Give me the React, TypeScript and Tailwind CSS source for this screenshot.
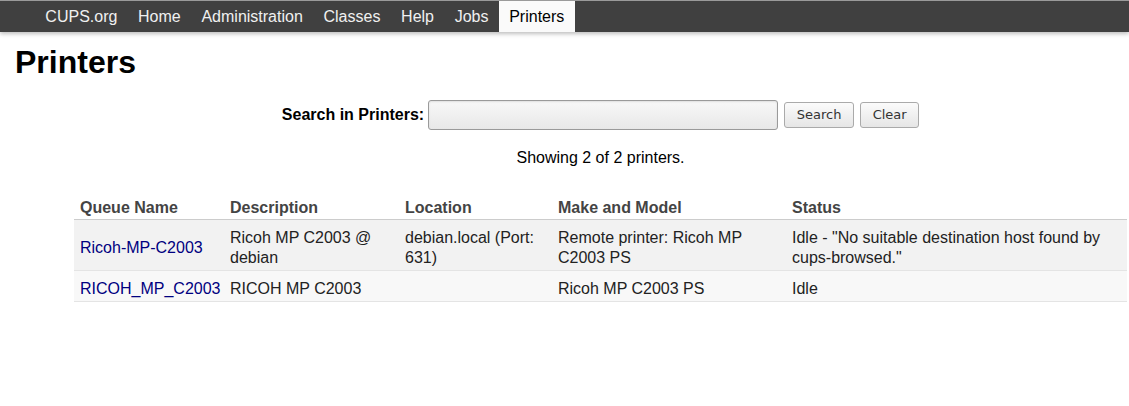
import React from 'react';

const navItems = ['CUPS.org', 'Home', 'Administration', 'Classes', 'Help', 'Jobs', 'Printers'];

const printers = [
  {
    name: 'Ricoh-MP-C2003',
    description: 'Ricoh MP C2003 @ debian',
    location: 'debian.local (Port: 631)',
    model: 'Remote printer: Ricoh MP C2003 PS',
    status: 'Idle - "No suitable destination host found by cups-browsed."',
  },
  {
    name: 'RICOH_MP_C2003',
    description: 'RICOH MP C2003',
    location: '',
    model: 'Ricoh MP C2003 PS',
    status: 'Idle',
  },
];

export default function App() {
  return (
    <div className="min-h-[406px] bg-white text-[#222] text-[16px] font-['Liberation_Sans',Arial,sans-serif]">
      {/* Header */}
      <div className="h-[32px] bg-[#404040] border-t border-[#9a9a9a] shadow-[0_2px_4px_rgba(0,0,0,0.25)] flex pl-[35px]">
        {navItems.map((item) => (
          <a
            key={item}
            className={
              item === 'Printers'
                ? 'px-[10.35px] flex items-center bg-[#fafafa] text-black'
                : 'px-[10.35px] flex items-center text-[#f0f0f0]'
            }
          >
            {item}
          </a>
        ))}
      </div>

      <h1 className="ml-[15px] mt-[12px] text-[32px] leading-[37px] font-bold text-black">Printers</h1>

      <div className="ml-[74px] mr-[2px]">
        {/* Search */}
        <form className="mt-[19px] flex items-center justify-center">
          <b className="text-black mr-[4px]">Search in Printers:</b>
          <input
            type="text"
            className="w-[350px] h-[30px] rounded-[3px] border border-[#9a9a9a] bg-gradient-to-b from-[#f8f8f8] to-[#e8e8e8] shadow-[inset_0_1px_2px_rgba(0,0,0,0.1)]"
          />
          <button
            type="button"
            className="ml-[6px] w-[70px] h-[26px] rounded-[3px] border border-[#aaa] bg-gradient-to-b from-[#fbfbfb] to-[#e6e6e6] text-[13px] text-[#333] font-['DejaVu_Sans',sans-serif]"
          >
            Search
          </button>
          <button
            type="button"
            className="ml-[6px] w-[59px] h-[26px] rounded-[3px] border border-[#aaa] bg-gradient-to-b from-[#fbfbfb] to-[#e6e6e6] text-[13px] text-[#333] font-['DejaVu_Sans',sans-serif]"
          >
            Clear
          </button>
        </form>

        <p className="mt-[19px] text-center text-black leading-[18px]">Showing 2 of 2 printers.</p>

        {/* Printer list */}
        <table className="mt-[22px] w-full table-fixed border-collapse text-left leading-[20px]">
          <thead>
            <tr className="border-b border-[#cccccc]">
              <th className="w-[150px] pl-[6px] pr-[2px] pt-[9px] pb-[1px] font-bold text-[#444]">Queue Name</th>
              <th className="w-[175px] pl-[6px] pr-[2px] pt-[9px] pb-[1px] font-bold text-[#444]">Description</th>
              <th className="w-[153px] pl-[6px] pr-[2px] pt-[9px] pb-[1px] font-bold text-[#444]">Location</th>
              <th className="w-[234px] pl-[6px] pr-[2px] pt-[9px] pb-[1px] font-bold text-[#444]">Make and Model</th>
              <th className="pl-[6px] pr-[2px] pt-[9px] pb-[1px] font-bold text-[#444]">Status</th>
            </tr>
          </thead>
          <tbody>
            {printers.map((p, idx) => (
              <tr
                key={p.name}
                className={(idx % 2 === 0 ? 'bg-[#f2f2f2]' : 'bg-[#f8f8f8]') + ' border-b border-[#e4e4e4]'}
              >
                <td className="pl-[6px] pr-[2px] pt-[8px] pb-[2px] align-middle whitespace-nowrap">
                  <a className="text-[#000080]">{p.name}</a>
                </td>
                <td className="pl-[6px] pr-[2px] pt-[8px] pb-[2px] align-middle">{p.description}</td>
                <td className="pl-[6px] pr-[2px] pt-[8px] pb-[2px] align-middle">{p.location}</td>
                <td className="pl-[6px] pr-[2px] pt-[8px] pb-[2px] align-middle">{p.model}</td>
                <td className="pl-[6px] pr-[2px] pt-[8px] pb-[2px] align-middle">{p.status}</td>
              </tr>
            ))}
          </tbody>
        </table>
      </div>
    </div>
  );
}
